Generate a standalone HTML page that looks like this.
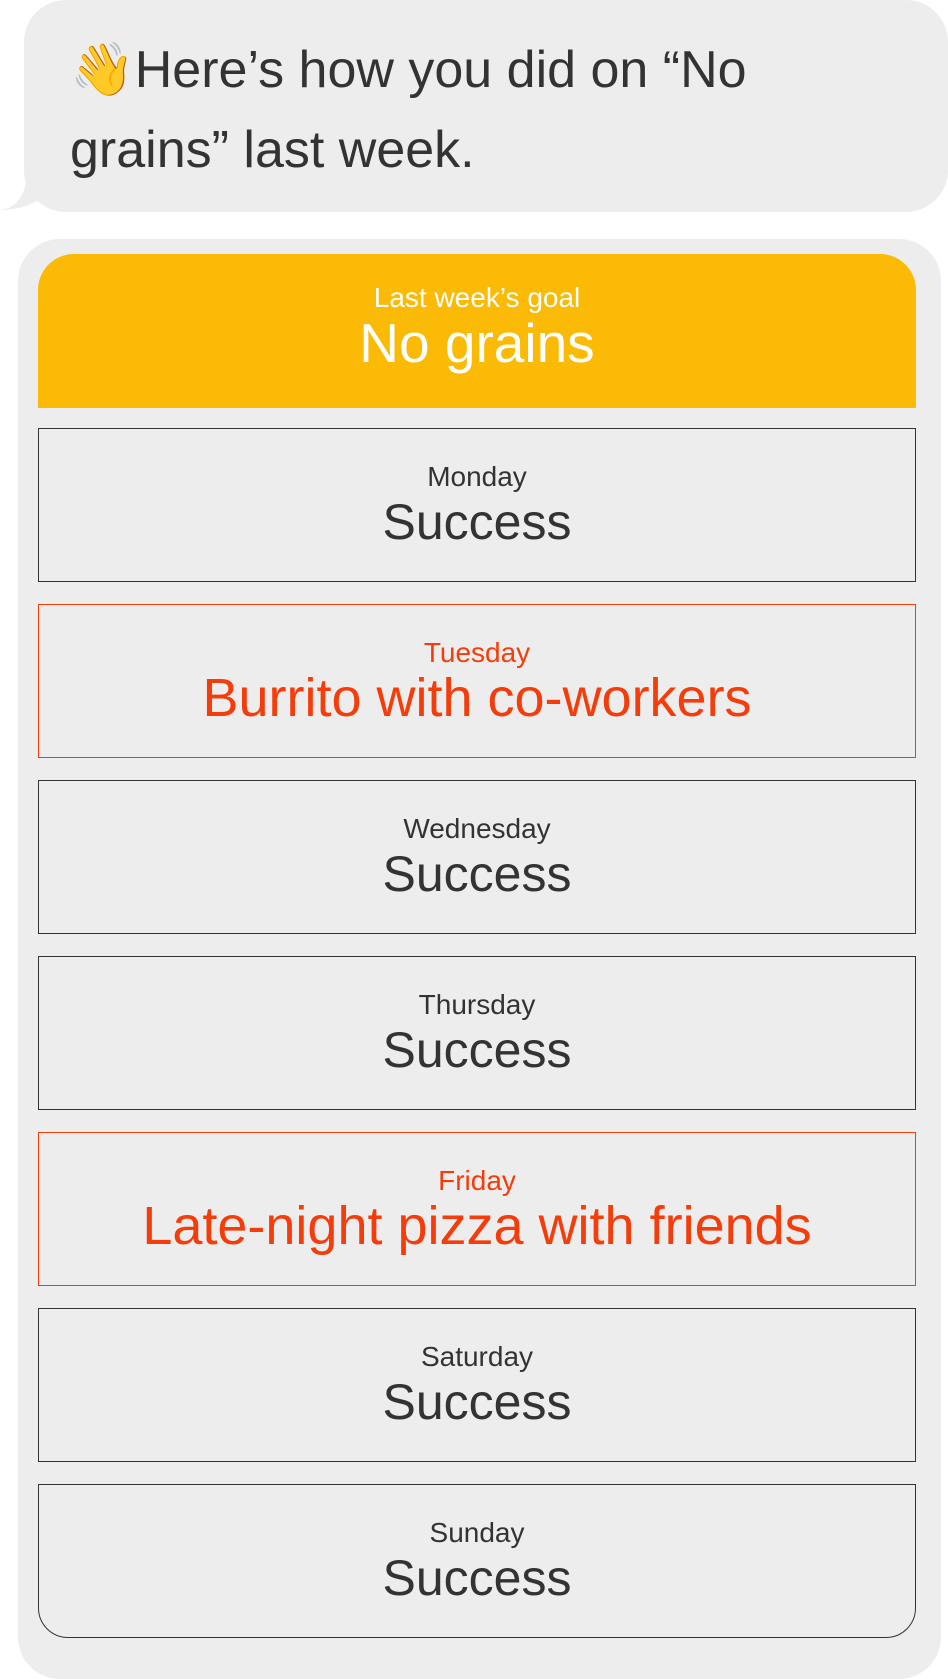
<!DOCTYPE html>
<html><head><meta charset="utf-8"><style>
*{margin:0;padding:0;box-sizing:border-box}
body{width:948px;height:1659px;background:#fff;font-family:"Liberation Sans",sans-serif;position:relative;overflow:hidden;color:#333}
.bubble{position:absolute;left:24px;top:0;width:924px;height:212px;background:#ededed;border-radius:42px}
.tail{position:absolute;left:0;top:150px}
.btext{position:absolute;left:70px;top:30px;font-size:52px;line-height:80px;color:#333;width:860px;white-space:nowrap}
.card{position:absolute;left:18px;top:239px;width:923px;height:1440px;background:#ededed;border-radius:42px}
.hdr{position:absolute;left:38px;top:254px;width:878px;height:154px;background:#fbba05;border-radius:36px 36px 0 0;text-align:center;color:#fff}
.box{position:absolute;left:38px;width:878px;height:154px;border:1px solid #333;text-align:center}
.red{border-color:#f53c0b;color:#f53c0b}
.lbl{font-size:28px;margin-top:31px;line-height:34px}
.main{font-size:50px;line-height:56px}
.red .main{font-size:54px}
</style></head><body>
<svg class="tail" width="60" height="62"><path d="M0 60 C20 58 30 40 28 0 L60 0 L60 48 L42 48 C30 56 16 60 0 60Z" fill="#ededed"/></svg>
<div class="bubble"></div>
<div class="btext"><span style="font-family:'Noto Color Emoji',sans-serif">👋</span>Here’s how you did on “No<br>grains” last week.</div>
<div class="card"></div>
<div class="hdr"><div class="lbl" style="margin-top:27px">Last week’s goal</div><div class="main" style="font-size:55px">No grains</div></div>
<div class="box" style="top:428px"><div class="lbl">Monday</div><div class="main">Success</div></div>
<div class="box red" style="top:604px"><div class="lbl">Tuesday</div><div class="main">Burrito with co-workers</div></div>
<div class="box" style="top:780px"><div class="lbl">Wednesday</div><div class="main">Success</div></div>
<div class="box" style="top:956px"><div class="lbl">Thursday</div><div class="main">Success</div></div>
<div class="box red" style="top:1132px"><div class="lbl">Friday</div><div class="main">Late-night pizza with friends</div></div>
<div class="box" style="top:1308px"><div class="lbl">Saturday</div><div class="main">Success</div></div>
<div class="box" style="top:1484px;border-radius:0 0 30px 30px"><div class="lbl">Sunday</div><div class="main">Success</div></div>
</body></html>
